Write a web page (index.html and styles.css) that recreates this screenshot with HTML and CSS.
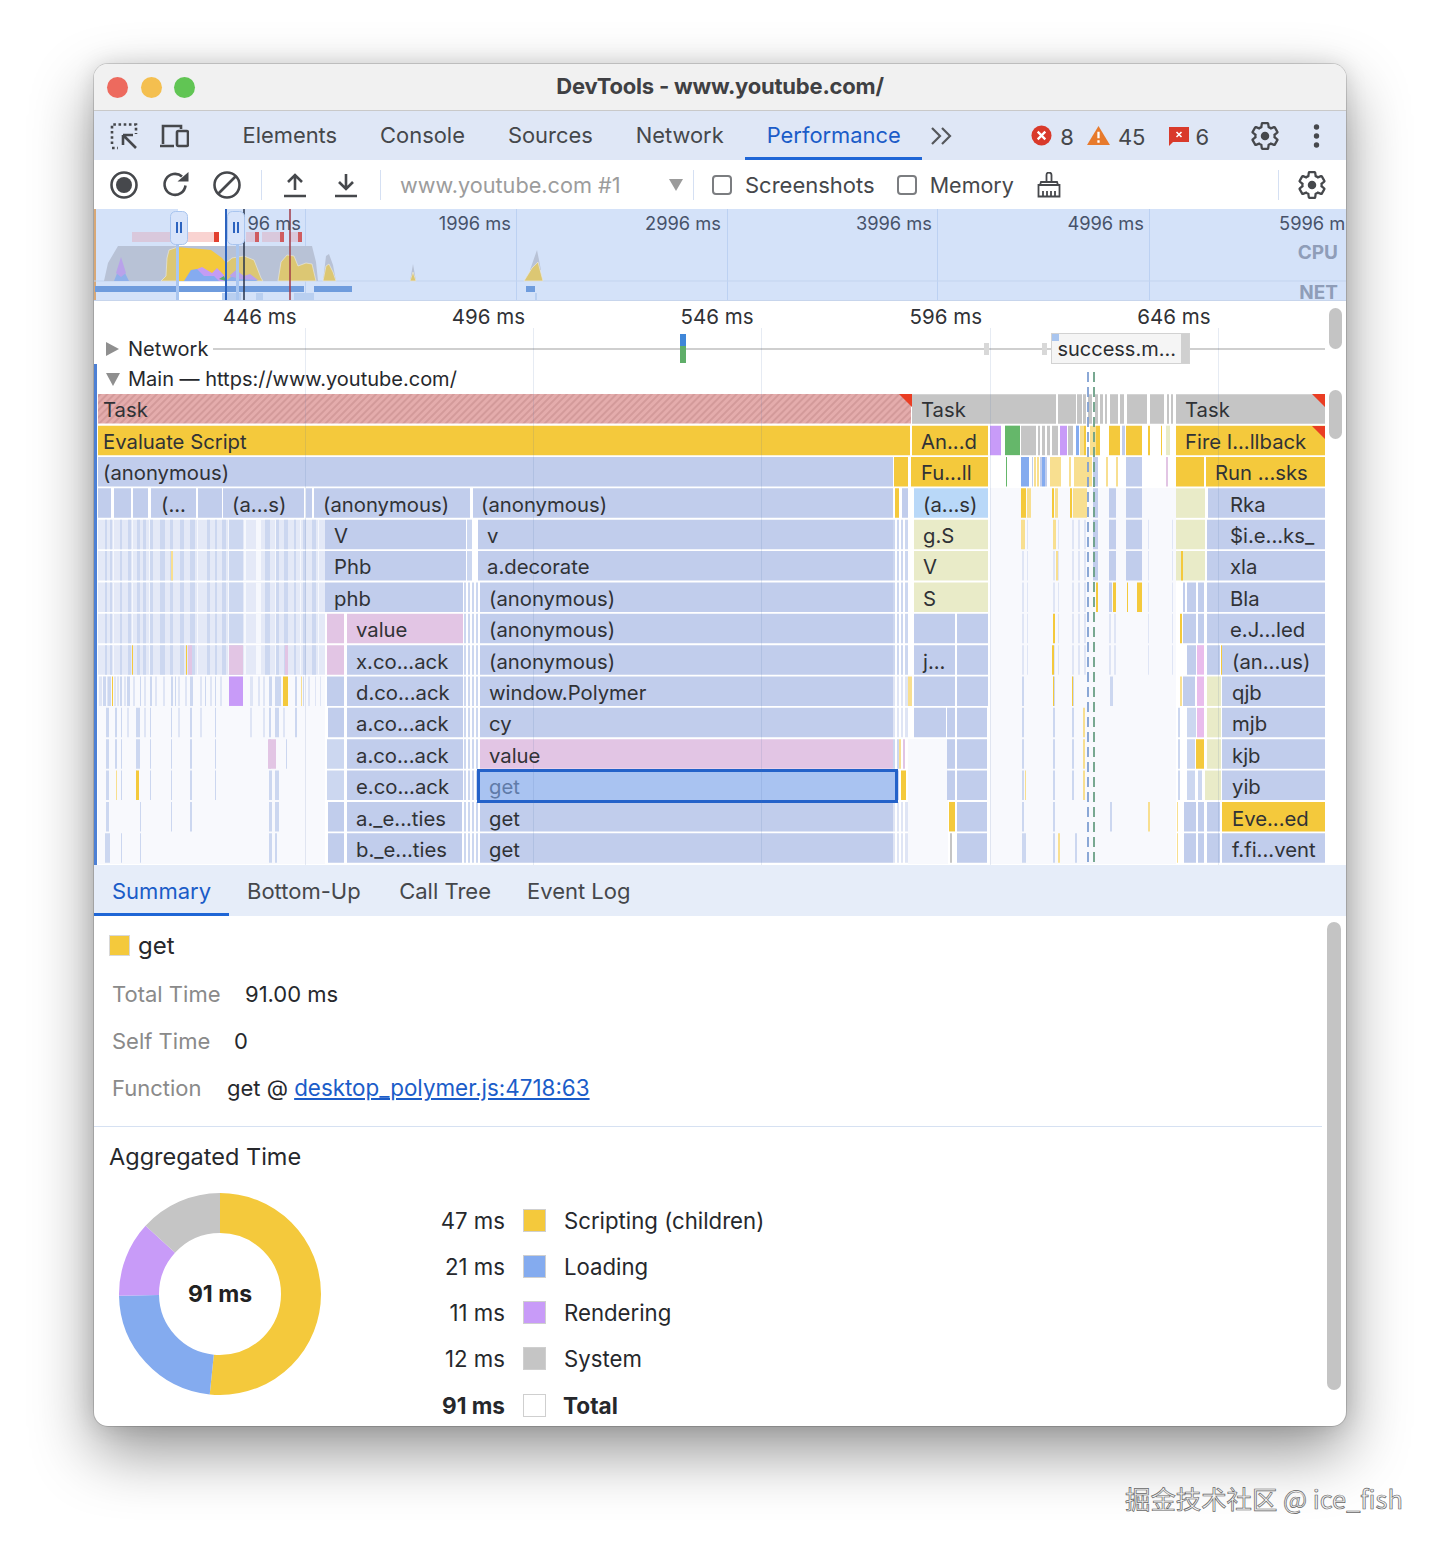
FILE: index.html
```html
<!DOCTYPE html>
<html lang="en">
<head>
<meta charset="utf-8">
<title>DevTools - www.youtube.com/</title>
<link rel="stylesheet" href="styles.css">
</head>
<body>
<svg class="defs" width="0" height="0" aria-hidden="true">
  <defs>
    <g id="gear"><path class="ico-line" d="M19.14 12.94c.04-.3.06-.61.06-.94 0-.32-.02-.64-.07-.94l2.03-1.58a.49.49 0 0 0 .12-.61l-1.92-3.32a.488.488 0 0 0-.59-.22l-2.39.96c-.5-.38-1.03-.7-1.62-.94l-.36-2.54a.484.484 0 0 0-.48-.41h-3.84c-.24 0-.43.17-.47.41l-.36 2.54c-.59.24-1.13.57-1.62.94l-2.39-.96c-.22-.08-.47 0-.59.22L2.74 8.87c-.12.21-.08.47.12.61l2.03 1.58c-.05.3-.09.63-.09.94s.02.64.07.94l-2.03 1.58a.49.49 0 0 0-.12.61l1.92 3.32c.12.22.37.29.59.22l2.39-.96c.5.38 1.03.7 1.62.94l.36 2.54c.05.24.24.41.48.41h3.84c.24 0 .44-.17.47-.41l.36-2.54c.59-.24 1.13-.56 1.62-.94l2.39.96c.22.08.47 0 .59-.22l1.92-3.32c.12-.22.07-.47-.12-.61l-2.01-1.58z"/><circle class="ico-fill" cx="12" cy="12" r="3.2"/></g>
    <pattern id="hatch" width="5" height="5" patternUnits="userSpaceOnUse" patternTransform="rotate(45)"><rect class="hatch-a" width="5" height="5"/><rect class="hatch-b" width="2" height="5"/></pattern>
    <path id="noise" d="M98 15H325"/>
    <path id="noise-a" d="M105 15H107M110 15H112M120 15H122M128 15H131M137 15H140M143 15H146M150 15H153M160 15H165M170 15H173M180 15H184M190 15H195M207 15H210M215 15H217M222 15H226M229 15H243M265 15H270M276 15H279M284 15H288M294 15H296M303 15H306M312 15H316"/>
    <path id="noise-gap" d="M113 15H114M132 15H133M149 15H150M197 15H198M228 15H229M244 15H246M256 15H261M275 15H276M300 15H301M318 15H319"/>
    <path id="right-a" d="M893 15H895M897 15H899M901 15H903M905 15H908"/>
    <path id="mid-a" d="M1022 15H1024M1027 15H1028M1053 15H1055M1058 15H1059M1072 15H1074M1078 15H1080M1084 15H1086M1109 15H1111M1114 15H1116M1148 15H1149M1172 15H1173"/>
    <path id="gut" d="M464 15H466M468 15H470M472 15H474M476 15H478"/>
  </defs>
</svg>

<main class="window">
  <header class="titlebar">
    <div class="lights"><i class="light l-red"></i><i class="light l-amber"></i><i class="light l-green"></i></div>
    <h1 class="title">DevTools - www.youtube.com/</h1>
  </header>

  <nav class="tabbar">
    <svg class="tool inspect" viewBox="0 0 28 28"><path class="ico-dots" d="M2 22V2.5H26V12"/><path class="ico-dots" d="M2 26h6"/><path class="ico-line2" d="M13 13h10M13 13v10M13.5 13.5L26 26"/></svg>
    <svg class="tool device" viewBox="0 0 30 26"><path class="ico-line2" d="M4 21V3h18v3M1 23h14"/><rect class="ico-line2" x="18" y="8" width="11" height="15" rx="1.5"/></svg>
    <div class="tabs">
      <span class="tab">Elements</span>
      <span class="tab">Console</span>
      <span class="tab">Sources</span>
      <span class="tab">Network</span>
      <span class="tab active">Performance</span>
    </div>
    <svg class="more" viewBox="0 0 24 20"><path d="M2 2l8 8-8 8M12 2l8 8-8 8"/></svg>
    <div class="status">
      <span class="stat s-err"><svg viewBox="0 0 22 22" class="stat-ico"><circle cx="11" cy="11" r="10.5" class="c-err"/><path d="M7 7l8 8M15 7l-8 8" class="c-x"/></svg>8</span>
      <span class="stat s-warn"><svg viewBox="0 0 24 22" class="stat-ico wide"><path d="M12 1L24 21H0z" class="c-warn"/><path d="M12 7v7M12 16v2.5" class="c-x"/></svg>45</span>
      <span class="stat s-flag"><svg viewBox="0 0 20 20" class="stat-ico small"><path d="M0 1h20v15H4L0 20z" class="c-err"/><path d="M7.5 6l5 5M12.5 6l-5 5" class="c-x thin"/></svg>6</span>
    </div>
    <svg class="gear gear-main" viewBox="0 0 24 24"><use href="#gear"/></svg>
    <svg class="kebab" viewBox="0 0 6 24"><circle cx="3" cy="3" r="2.7"/><circle cx="3" cy="12" r="2.7"/><circle cx="3" cy="21" r="2.7"/></svg>
  </nav>

  <div class="toolbar">
    <svg class="tool-b rec" viewBox="0 0 28 28"><circle class="ico-line2" cx="14" cy="14" r="12.5"/><circle class="ico-fill" cx="14" cy="14" r="8"/></svg>
    <svg class="tool-b reload" viewBox="0 0 28 28"><path class="ico-line2" d="M23.5 14.5A10.5 10.5 0 1 1 20 5.5"/><path class="ico-fill" d="M15.5 10.5H26.500V1z"/></svg>
    <svg class="tool-b clear" viewBox="0 0 28 28"><circle class="ico-line2" cx="14" cy="14" r="12.500"/><path class="ico-line2" d="M23 5L5 23"/></svg>
    <i class="sep s1"></i>
    <svg class="tool-c tool-up" viewBox="0 0 24 26"><path class="ico-line2" d="M12 18V3M5 10l7-7 7 7M1 24h22"/></svg>
    <svg class="tool-c tool-down" viewBox="0 0 24 26"><path class="ico-line2" d="M12 2v15M5 10l7 7 7-7M1 24h22"/></svg>
    <i class="sep s2"></i>
    <span class="target">www.youtube.com #1</span>
    <i class="caret"></i>
    <i class="sep s3"></i>
    <label class="check c1"><i class="box"></i>Screenshots</label>
    <label class="check c2"><i class="box"></i>Memory</label>
    <svg class="broom" viewBox="0 0 24 26"><path class="ico-line1" d="M9.500 9V3a2.500 2.500 0 0 1 5 0v6M3 13l1-3h16l1 3M1.500 13h21v11.500h-21zM6 24v-5M10 24v-5M14 24v-5M18 24v-5"/></svg>
    <i class="sep s4"></i>
    <svg class="gear gear-side" viewBox="0 0 24 24"><use href="#gear"/></svg>
  </div>

  <section class="overview" aria-label="Timeline overview">
    <svg class="overview-svg" viewBox="94 209 1252 91">
      <rect class="ov-bg" x="94" y="209" width="1252" height="91"/>
      <rect class="ov-white" x="178" y="209" width="48" height="91"/>
      <rect class="ov-edge" x="94" y="209" width="2" height="91"/>
      <path class="ov-grid" d="M305.500 209v91M516.500 209v91M727.500 209v91M937.500 209v91M1149.500 209v91"/>
      <path class="ov-base" d="M94 281H1346"/>
      <path class="task-dim" d="M132 232h46v10h-46zM246 232h13v10h-13zM262 232h22v10h-22zM289 232h13v10h-13z"/>
      <path class="task-lite" d="M178 232h36v10h-36z"/>
      <path class="task-tip" d="M214 232h5v10h-5z"/>
      <path class="task-tip-dim" d="M255 232h4v10h-4zM280 232h4v10h-4zM298 232h4v10h-4z"/>
      <path class="cpu-gray" d="M104 281L108 263L118 246H312L316 262L318 281zM323 281L326 256L329 254L333 265L336 281z"/>
      <path class="cpu-yellow-dim" d="M226 281V263L232 258L244 256L254 260L261 278L263 281zM278 281L281 262L287 255L294 256L298 266L306 263L312 264L316 281zM323 281L326 266L329 264L333 272L336 281zM161 281L166 276L167 258L169 250L178 247V281z"/>
      <path class="cpu-yellow-line" d="M178 281V247L187 248L201 249L211 250L222 258L226 263V281z"/>
      <path class="cpu-blue-dim" d="M114 281L118 271L121 259L124 271L129 281zM226 281L232 276L240 278L248 276L258 281z"/>
      <path class="cpu-purple-dim" d="M116 273L121 257L126 273L121 277zM229 276L236 270L244 276L250 274L258 280L240 279z"/>
      <path class="cpu-purple" d="M190 272L202 267L212 273L217 268L224 275L226 281H196z"/>
      <path class="cpu-blue" d="M184 281L191 270L197 269L204 276L214 276L219 281z"/>
      <path class="cpu-green" d="M219 279L224 276L226 281z"/>
      <path class="cpu-gray" d="M410 281L413 264L416 281zM530 270L537 250L541 270z"/>
      <path class="cpu-yellow-dim" d="M410 281L413 272L416 281zM524 281L532 268L538 262L543 281z"/>
      <path class="net-bar" d="M95 286h209v6h-209zM314 286h38v6h-38zM526 286h9v6h-9z"/>
      <path class="net-low" d="M222 293h19v7h-19zM256 293h7v7h-7zM294 293h20v7h-20zM535 293h2v7h-2z"/>
      <rect class="stem" x="176" y="244" width="3" height="56"/>
      <rect class="stem" x="236" y="244" width="3" height="56"/>
      <path class="mark-blue" d="M226 209v91"/>
      <path class="mark-dark" d="M244 209v91"/>
      <path class="mark-red" d="M290 209v91"/>
      <rect class="handle" x="170.500" y="211.500" width="17" height="33" rx="5"/>
      <rect class="handle" x="227.500" y="211.500" width="17" height="33" rx="5"/>
      <path class="grip" d="M177 222v11M181 222v11M234 222v11M238 222v11"/>
      <text class="ov-label" x="301" y="230">96 ms</text>
      <text class="ov-label" x="511" y="230">1996 ms</text>
      <text class="ov-label" x="721" y="230">2996 ms</text>
      <text class="ov-label" x="932" y="230">3996 ms</text>
      <text class="ov-label" x="1144" y="230">4996 ms</text>
      <text class="ov-label" x="1355" y="230">5996 ms</text>
      <text class="ov-tag" x="1338" y="259">CPU</text>
      <text class="ov-tag" x="1338" y="299">NET</text>
    </svg>
  </section>

  <section class="timeline">
    <div class="ruler">
      <span class="tick">446 ms</span>
      <span class="tick">496 ms</span>
      <span class="tick">546 ms</span>
      <span class="tick">596 ms</span>
      <span class="tick">646 ms</span>
    </div>
    <div class="track-row">
      <i class="tri right"></i><span class="track-name">Network</span>
      <div class="net-track">
        <i class="net-line"></i>
        <i class="net-req"></i>
        <i class="net-tick t1"></i>
        <i class="net-tick t2"></i>
        <span class="net-box"><i class="net-corner"></i>success.m...<i class="net-end"></i></span>
      </div>
    </div>
    <div class="track-row main-row">
      <i class="tri tri-down"></i><span class="track-name">Main — https://www.youtube.com/</span>
    </div>

    <svg class="flame" viewBox="94 395 1252 470">
      <rect class="pale" x="98" y="677" width="227" height="188"/>
      <rect class="pale" x="990" y="489" width="186" height="376"/>
      <rect class="pale" x="908" y="740" width="40" height="125"/>

      <!-- row 0 -->
      <g transform="translate(0 395)" class="bars">
        <rect class="hatched" x="98" width="813" height="29.500"/>
        <path class="gray" d="M912 15H1056M1058 15H1076M1077 15H1082M1083 15H1086M1088 15H1092M1095 15H1098M1100 15H1103M1105 15H1107M1110 15H1118M1120 15H1124M1127 15H1147M1150 15H1164M1167 15H1169M1171 15H1173M1176 15H1325"/>
      </g>
      <!-- row 1 -->
      <g transform="translate(0 426.400)" class="bars">
        <path class="yellow" d="M98 15H910M912 15H988M1084 15H1086M1096 15H1100M1109 15H1120M1126 15H1142M1148 15H1150M1161 15H1162M1176 15H1325"/>
        <path class="purple" d="M990 15H1001M1060 15H1067"/>
        <path class="green" d="M1005 15H1020"/>
        <path class="gray" d="M1021 15H1036M1038 15H1040M1042 15H1045M1047 15H1050M1052 15H1058M1068 15H1073"/>
        <path class="strong-blue" d="M1076 15H1079"/>
        <path class="lite-yellow" d="M1080 15H1084M1090 15H1096"/>
        <path class="fn" d="M1122 15H1125"/>
        <path class="pale-green" d="M1166 15H1170"/>
      </g>
      <!-- row 2 -->
      <g transform="translate(0 457.700)" class="bars">
        <path class="fn" d="M98 15H893M1032 15H1033M1040 15H1042M1045 15H1047M1093 15H1098M1126 15H1142"/>
        <path class="yellow" d="M894 15H908M911 15H988M1176 15H1204M1206 15H1325"/>
        <path class="green" d="M1006 15H1007"/>
        <path class="strong-blue" d="M1021 15H1029M1042 15H1045"/>
        <path class="lite-yellow" d="M1034 15H1036M1037 15H1039M1050 15H1061M1069 15H1071M1074 15H1092M1106 15H1108M1116 15H1118"/>
        <path class="pink" d="M1166 15H1168"/>
      </g>
      <!-- row 3 -->
      <g transform="translate(0 489.100)" class="bars">
        <path class="fn" d="M98 15H111M114 15H131M133 15H148M151 15H196M198 15H222M223 15H304M306 15H312M314 15H470M473 15H893M902 15H908M1093 15H1098M1109 15H1116M1126 15H1142M1208 15H1325"/>
        <path class="yellow" d="M895 15H899M1021 15H1026M1052 15H1054M1070 15H1072"/>
        <path class="lite-yellow" d="M1027 15H1031M1055 15H1058M1073 15H1087"/>
        <path class="sky" d="M914 15H988"/>
        <path class="pale-green" d="M1176 15H1205"/>
      </g>
      <!-- rows 4-8 noise -->
      <g transform="translate(0 520.400)" class="bars"><use href="#noise" class="base-n"/><use href="#noise-a" class="fn-n"/><use href="#noise-gap" class="blank"/><use href="#right-a" class="fn-n"/><use href="#mid-a" class="lite-n"/>
        <path class="fn" d="M325 15H466M478 15H893M1093 15H1098M1109 15H1116M1126 15H1142M1207 15H1325"/>
        <path class="pale-green" d="M914 15H988M1176 15H1205"/>
        <path class="lite-yellow" d="M1021 15H1025M1053 15H1056"/>
        <path class="fn-n" d="M467 15H472"/>
      </g>
      <g transform="translate(0 551.800)" class="bars"><use href="#noise" class="base-n"/><use href="#noise-a" class="fn-n"/><use href="#noise-gap" class="blank"/><use href="#right-a" class="fn-n"/><use href="#mid-a" class="lite-n"/>
        <path class="fn" d="M325 15H466M478 15H893M1093 15H1098M1109 15H1116M1126 15H1142M1207 15H1325"/>
        <path class="pale-green" d="M914 15H988M1176 15H1205"/>
        <path class="yellow" d="M1181 15H1183"/>
        <path class="lite-yellow" d="M1056 15H1058"/>
        <path class="lite-yellow" d="M171 15H173"/>
        <path class="fn-n" d="M467 15H472"/>
      </g>
      <g transform="translate(0 583.200)" class="bars"><use href="#noise" class="base-n"/><use href="#noise-a" class="fn-n"/><use href="#noise-gap" class="blank"/><use href="#right-a" class="fn-n"/><use href="#mid-a" class="lite-n"/><use href="#gut" class="fn-n"/>
        <path class="fn" d="M325 15H463M480 15H893M1109 15H1112M1183 15H1185M1187 15H1196M1198 15H1204M1207 15H1325"/>
        <path class="pale-green" d="M914 15H988"/>
        <path class="yellow" d="M1096 15H1098M1113 15H1116M1127 15H1128M1137 15H1142"/>
      </g>
      <g transform="translate(0 614.500)" class="bars"><use href="#noise" class="base-n"/><use href="#noise-a" class="fn-n"/><use href="#noise-gap" class="blank"/><use href="#right-a" class="fn-n"/><use href="#mid-a" class="lite-n"/><use href="#gut" class="fn-n"/>
        <path class="pink" d="M327 15H344M347 15H463"/>
        <path class="fn" d="M480 15H893M914 15H955M957 15H988M1183 15H1196M1198 15H1204M1207 15H1325"/>
        <path class="yellow" d="M1053 15H1055M1180 15H1182"/>
      </g>
      <g transform="translate(0 645.900)" class="bars"><use href="#noise" class="base-n"/><use href="#noise-a" class="fn-n"/><use href="#noise-gap" class="blank"/><use href="#right-a" class="fn-n"/><use href="#mid-a" class="lite-n"/><use href="#gut" class="fn-n"/>
        <path class="pink" d="M327 15H344M229 15H243M285 15H288M188 15H192"/>
        <path class="fn" d="M347 15H463M480 15H893M914 15H955M957 15H988M1187 15H1196M1207 15H1220M1222 15H1325"/>
        <path class="yellow" d="M132 15H133M186 15H187M1052 15H1054M1221 15H1222"/>
        <path class="pink-hot" d="M1197 15H1204"/>
      </g>
      <!-- rows 9-14 -->
      <g transform="translate(0 677.200)" class="bars"><use href="#gut" class="fn-n"/><use href="#right-a" class="lite-n"/>
        <path class="lite-n" d="M99 15H102M107 15H108M114 15H116M117 15H119M124 15H126M133 15H135M144 15H146M155 15H157M163 15H165M178 15H180M185 15H187M200 15H202M210 15H212M220 15H222M250 15H253M258 15H260M263 15H265M308 15H310M315 15H316M320 15H321"/>
        <path class="fn-n" d="M103 15H106M108 15H111M120 15H122M127 15H130M140 15H141M150 15H152M171 15H173M175 15H176M190 15H193M205 15H206M215 15H216M269 15H272M275 15H281M295 15H297M303 15H304M1022 15H1024M1053 15H1055M1072 15H1074M1110 15H1113"/>
        <path class="yellow" d="M112 15H113M283 15H288M1053 15H1054M1072 15H1073"/>
        <path class="lite-yellow" d="M301 15H302M908 15H912M1180 15H1182"/>
        <path class="purple" d="M229 15H243"/>
        <path class="fn" d="M327 15H344M347 15H463M480 15H893M914 15H955M957 15H988M1183 15H1195M1222 15H1325"/>
        <path class="pink-hot" d="M1197 15H1204"/>
        <path class="pale-green" d="M1207 15H1221"/>
      </g>
      <g transform="translate(0 708.600)" class="bars"><use href="#gut" class="fn-n"/><use href="#right-a" class="lite-n"/>
        <path class="lite-n" d="M127 15H129M144 15H146M178 15H180M200 15H202M250 15H252M263 15H265M283 15H285"/>
        <path class="fn-n" d="M106 15H109M115 15H117M121 15H122M136 15H140M150 15H151M171 15H172M190 15H192M215 15H216M269 15H271M275 15H279M295 15H297M1022 15H1024M1053 15H1055M1072 15H1074M1178 15H1180M1187 15H1196"/>
        <path class="fn" d="M328 15H344M347 15H463M480 15H893M914 15H946M947 15H955M957 15H987M1222 15H1325"/>
        <path class="lite-yellow" d="M1083 15H1085"/>
        <path class="pink-hot" d="M1197 15H1204"/>
        <path class="pale-green" d="M1207 15H1221"/>
      </g>
      <g transform="translate(0 740)" class="bars"><use href="#gut" class="fn-n"/>
        <path class="fn-n" d="M106 15H109M115 15H117M121 15H122M136 15H140M150 15H151M171 15H172M190 15H192M215 15H216M269 15H271M286 15H287M327 15H344M893 15H895M897 15H899M1022 15H1024M1053 15H1055M1072 15H1074M1178 15H1180M1187 15H1195"/>
        <path class="pink" d="M268 15H276M903 15H905"/>
        <path class="fn" d="M347 15H463M947 15H955M957 15H987M1222 15H1325"/>
        <path class="pink" d="M480 15H893"/>
        <path class="lite-yellow" d="M899 15H901M1083 15H1085"/>
        <path class="yellow" d="M1196 15H1204"/>
        <path class="pale-green" d="M1207 15H1221"/>
      </g>
      <g transform="translate(0 771.300)" class="bars"><use href="#gut" class="fn-n"/>
        <path class="fn-n" d="M106 15H109M121 15H122M136 15H137M150 15H151M171 15H172M190 15H192M215 15H216M269 15H272M275 15H279M327 15H344M893 15H895M897 15H899M1022 15H1024M1053 15H1055M1072 15H1074M1178 15H1180M1187 15H1195M1198 15H1202"/>
        <path class="lite-yellow" d="M116 15H117M1025 15H1026M1083 15H1085"/>
        <path class="yellow" d="M901 15H906M136 15H139"/>
        <path class="fn" d="M347 15H463M947 15H955M957 15H987M1222 15H1325"/>
        <path class="pale-green" d="M1205 15H1221"/>
      </g>
      <g transform="translate(0 802.700)" class="bars"><use href="#gut" class="fn-n"/><use href="#right-a" class="lite-n"/>
        <path class="fn-n" d="M106 15H109M140 15H141M171 15H172M190 15H192M269 15H272M275 15H279M1022 15H1024M1053 15H1055M1110 15H1112"/>
        <path class="lite-yellow" d="M1148 15H1150M1177 15H1178"/>
        <path class="yellow" d="M949 15H955"/>
        <path class="fn" d="M328 15H344M347 15H462M480 15H893M957 15H987M1184 15H1196M1198 15H1204M1207 15H1220"/>
        <path class="yellow" d="M1222 15H1325"/>
      </g>
      <g transform="translate(0 834)" class="bars"><use href="#gut" class="fn-n"/><use href="#right-a" class="lite-n"/>
        <path class="fn-n" d="M105 15H110M121 15H122M140 15H141M269 15H272M275 15H277M1022 15H1026M1053 15H1055M1075 15H1077"/>
        <path class="lite-yellow" d="M1058 15H1060M1177 15H1178"/>
        <path class="gray" d="M950 15H952"/>
        <path class="fn" d="M328 15H344M347 15H462M480 15H893M957 15H987M1184 15H1196M1198 15H1204M1207 15H1220M1222 15H1325"/>
      </g>

      <path class="tri-red" d="M899 395H912V408zM1312 395H1325V408zM1312 427H1325V440z"/>
      <rect class="selected" x="478.500" y="771.500" width="418" height="31"/>

      <g class="labels" transform="translate(0 1)">
        <text x="103" y="417">Task</text><text x="921" y="417">Task</text><text x="1185" y="417">Task</text>
        <text x="103" y="449">Evaluate Script</text><text x="921" y="449">An...d</text><text x="1185" y="449">Fire I...llback</text>
        <text x="103" y="480">(anonymous)</text><text x="921" y="480">Fu...ll</text><text x="1215" y="480">Run ...sks</text>
        <text x="161" y="512">(...</text><text x="232" y="512">(a...s)</text><text x="323" y="512">(anonymous)</text><text x="481" y="512">(anonymous)</text><text x="923" y="512">(a...s)</text><text x="1230" y="512">Rka</text>
        <text x="334" y="543">V</text><text x="487" y="543">v</text><text x="923" y="543">g.S</text><text x="1230" y="543">$i.e...ks_</text>
        <text x="334" y="574">Phb</text><text x="487" y="574">a.decorate</text><text x="923" y="574">V</text><text x="1230" y="574">xla</text>
        <text x="334" y="606">phb</text><text x="489" y="606">(anonymous)</text><text x="923" y="606">S</text><text x="1230" y="606">Bla</text>
        <text x="356" y="637">value</text><text x="489" y="637">(anonymous)</text><text x="1230" y="637">e.J...led</text>
        <text x="356" y="669">x.co...ack</text><text x="489" y="669">(anonymous)</text><text x="923" y="669">j...</text><text x="1232" y="669">(an...us)</text>
        <text x="356" y="700">d.co...ack</text><text x="489" y="700">window.Polymer</text><text x="1232" y="700">qjb</text>
        <text x="356" y="731">a.co...ack</text><text x="489" y="731">cy</text><text x="1232" y="731">mjb</text>
        <text x="356" y="763">a.co...ack</text><text x="489" y="763">value</text><text x="1232" y="763">kjb</text>
        <text x="356" y="794">e.co...ack</text><text class="sel-text" x="489" y="794">get</text><text x="1232" y="794">yib</text>
        <text x="356" y="826">a._e...ties</text><text x="489" y="826">get</text><text x="1232" y="826">Eve...ed</text>
        <text x="356" y="857">b._e...ties</text><text x="489" y="857">get</text><text x="1232" y="857">f.fi...vent</text>
      </g>
    </svg>

    <svg class="overlay" viewBox="94 301 1252 564" aria-hidden="true">
      <path class="grid-line" d="M305.500 328V865M533.500 328V865M761.500 328V865M990.500 328V865M1218.500 328V865"/>
      <path class="dash-blue" d="M1088 372V865"/>
      <path class="dash-green" d="M1094 372V865"/>
      <rect class="main-edge" x="94" y="364" width="3" height="501"/>
    </svg>
    <i class="thumb thumb-a"></i>
    <i class="thumb thumb-b"></i>
  </section>

  <nav class="subtabs">
    <span class="subtab active">Summary</span>
    <span class="subtab">Bottom-Up</span>
    <span class="subtab st-call">Call Tree</span>
    <span class="subtab">Event Log</span>
  </nav>

  <section class="details">
    <div class="summary">
      <div class="event"><i class="swatch sw-yellow"></i><span>get</span></div>
      <div class="fact"><span class="k k-total">Total Time</span><span>91.00 ms</span></div>
      <div class="fact"><span class="k k-self">Self Time</span><span>0</span></div>
      <div class="fact"><span class="k k-func">Function</span><span>get @ <a class="link" href="#">desktop_polymer.js:4718:63</a></span></div>
    </div>
    <div class="aggregate">
      <h2 class="agg-title">Aggregated Time</h2>
      <div class="agg-body">
        <div class="donut">
          <svg class="donut-svg" viewBox="0 0 202 202">
            <circle class="slice d-yellow" cx="101" cy="101" r="81" pathLength="91" stroke-dasharray="47 44"/>
            <circle class="slice d-blue" cx="101" cy="101" r="81" pathLength="91" stroke-dasharray="21 70" stroke-dashoffset="-47"/>
            <circle class="slice d-purple" cx="101" cy="101" r="81" pathLength="91" stroke-dasharray="11 80" stroke-dashoffset="-68"/>
            <circle class="slice d-gray" cx="101" cy="101" r="81" pathLength="91" stroke-dasharray="12 79" stroke-dashoffset="-79"/>
          </svg>
          <span class="donut-total">91 ms</span>
        </div>
        <ul class="legend">
          <li><span class="ms">47 ms</span><i class="swatch sw-yellow big"></i><span>Scripting (children)</span></li>
          <li><span class="ms">21 ms</span><i class="swatch sw-blue big"></i><span>Loading</span></li>
          <li><span class="ms">11 ms</span><i class="swatch sw-purple big"></i><span>Rendering</span></li>
          <li><span class="ms">12 ms</span><i class="swatch sw-gray big"></i><span>System</span></li>
          <li class="total"><span class="ms">91 ms</span><i class="swatch sw-white big"></i><span>Total</span></li>
        </ul>
      </div>
    </div>
    <i class="thumb thumb-c"></i>
  </section>
</main>
<div class="watermark">掘金技术社区 @ ice_fish</div>
</body>
</html>
```

FILE: styles.css
```css
* { box-sizing: border-box; }
html, body { margin: 0; padding: 0; background: #fff; }
body { width: 1440px; height: 1551px; position: relative; overflow: hidden; font-family: Inter, "Noto Sans", sans-serif; color: #2b2d31; }
.defs { position: absolute; }
i { display: block; font-style: normal; }

.window { position: absolute; left: 94px; top: 64px; width: 1252px; height: 1362px; border-radius: 14px; overflow: hidden; background: #fff; display: flex; flex-direction: column; box-shadow: 0 0 0 1px rgba(0,0,0,.14), 0 26px 62px rgba(0,0,0,.42), 0 0 22px rgba(0,0,0,.12); }

.ico-line { fill: none; stroke: #46484c; stroke-width: 1.7; }
.ico-line1 { fill: none; stroke: #46484c; stroke-width: 1.8; }
.ico-line2 { fill: none; stroke: #46484c; stroke-width: 2.6; }
.ico-dots { fill: none; stroke: #46484c; stroke-width: 2.6; stroke-dasharray: 2.6 2.6; }
.ico-fill { fill: #46484c; }

.titlebar { height: 47px; flex: none; background: #f1f1f1; border-bottom: 1px solid #c9c9c9; position: relative; display: flex; align-items: center; justify-content: center; padding-bottom: 3px; }
.lights { position: absolute; left: 13px; top: 13px; display: flex; gap: 12.500px; }
.light { width: 21px; height: 21px; border-radius: 50%; }
.l-red { background: #ed6a5e; }
.l-amber { background: #f4bf4f; }
.l-green { background: #61c554; }
.title { margin: 0; font-size: 22px; font-weight: 700; color: #3f4043; letter-spacing: -.2px; }

.tabbar { height: 49px; flex: none; background: #dfe7f6; display: flex; align-items: center; position: relative; padding-left: 16px; }
.tool { flex: none; }
.inspect { width: 28px; height: 28px; margin-right: 21px; }
.device { width: 30px; height: 26px; }
.tabs { display: flex; align-self: stretch; margin-left: 32px; }
.tab { display: flex; align-items: center; padding: 0 21.500px; font-size: 21.900px; color: #45474b; white-space: nowrap; border-bottom: 4px solid transparent; border-top: 2px solid transparent; }
.tab.active { color: #1a5cc8; border-bottom: 3px solid #1f66d6; padding-bottom: 1px; }
.more { width: 24px; height: 20px; margin-left: 8px; fill: none; stroke: #55575b; stroke-width: 2.2; }
.status { display: flex; align-items: center; margin-left: 77px; font-size: 22px; color: #45474b; padding-top: 2px; }
.stat { display: flex; align-items: center; gap: 8px; }
.s-warn { margin-left: 13px; }
.s-flag { margin-left: 23px; gap: 7px; }
.stat-ico { width: 21px; height: 21px; margin-top: -2px; }
.stat-ico.wide { width: 23px; }
.stat-ico.small { width: 20px; height: 20px; }
.c-err { fill: #d93a2b; }
.c-warn { fill: #e77a2c; }
.c-x { fill: none; stroke: #fff; stroke-width: 2.4; }
.c-x.thin { stroke-width: 1.6; }
.gear { width: 32px; height: 32px; flex: none; }
.gear-main { margin-left: 40px; }
.kebab { width: 7px; height: 24px; margin-left: 32px; fill: #46484c; }

.toolbar { height: 49px; flex: none; background: #fff; display: flex; align-items: center; padding-left: 16px; font-size: 22px; color: #45474b; }
.tool-b { width: 28px; height: 28px; flex: none; }
.reload { margin-left: 24px; }
.clear { margin-left: 23px; }
.sep { width: 1px; height: 30px; background: #d5e0f3; flex: none; }
.s1 { margin-left: 20px; }
.tool-c { width: 24px; height: 26px; flex: none; }
.tool-up { margin-left: 21px; }
.tool-down { margin-left: 27px; }
.s2 { margin-left: 22px; }
.target { margin-left: 19px; color: #9c9c9c; white-space: nowrap; width: 269px; font-size: 21.700px; }
.caret { width: 0; height: 0; border-left: 7px solid transparent; border-right: 7px solid transparent; border-top: 12px solid #9b9b9b; flex: none; }
.s3 { margin-left: 10px; }
.check { display: flex; align-items: center; gap: 13px; white-space: nowrap; }
.box { width: 20px; height: 20px; border: 2px solid #7b7d80; border-radius: 4px; flex: none; }
.c1 { margin-left: 18px; }
.c2 { margin-left: 22px; font-size: 21.500px; }
.broom { width: 24px; height: 26px; margin-left: 23px; flex: none; }
.s4 { margin-left: auto; }
.gear-side { margin: 0 18px 0 17px; }

.overview { height: 92px; flex: none; border-bottom: 1px solid #c7d5ec; }
.overview-svg { display: block; width: 1252px; height: 91px; overflow: visible; }
.ov-bg { fill: #d4e2f9; }
.ov-white { fill: #fff; }
.ov-edge { fill: #d8a877; }
.ov-grid { stroke: #bcd1f2; stroke-width: 1; fill: none; }
.ov-base { stroke: #c3d4ef; stroke-width: 1; }
.task-dim { fill: #d9c8dc; }
.task-lite { fill: #f9d3d1; }
.task-tip { fill: #e2402f; }
.task-tip-dim { fill: #cf5c60; }
.cpu-gray { fill: #b8c2d6; }
.cpu-yellow-dim { fill: #dcc773; stroke: #e8e6dc; stroke-width: .7; }
.cpu-yellow-line { fill: #f4c93c; }
.cpu-blue-dim { fill: #8fb0ea; }
.cpu-purple-dim { fill: #b9a2ea; }
.cpu-purple { fill: #c49cf4; }
.cpu-blue { fill: #85abf0; }
.cpu-green { fill: #5bb06a; }
.net-bar { fill: #6f9cdd; }
.net-low { fill: #b9cff0; }
.stem { fill: #a9c6f0; }
.mark-blue { stroke: #2c63bf; stroke-width: 2; }
.mark-dark { stroke: #26324a; stroke-width: 1.500; }
.mark-red { stroke: #a23a46; stroke-width: 1.500; }
.handle { fill: #d8e4fa; stroke: #a9c5ef; stroke-width: 1; }
.grip { stroke: #2c63bf; stroke-width: 2; fill: none; }
.ov-label { font-size: 18.300px; fill: #47526a; text-anchor: end; }
.ov-tag { font-size: 19px; font-weight: 700; fill: #8f9db8; text-anchor: end; }

.timeline { position: relative; flex: none; height: 564px; display: flex; flex-direction: column; }
.ruler { height: 32px; flex: none; display: grid; grid-template-columns: repeat(5, 228.500px); font-size: 20.500px; color: #303236; margin-left: -26px; }
.tick { text-align: right; line-height: 32px; }
.track-row { height: 31px; flex: none; display: flex; align-items: center; padding-left: 12px; font-size: 20px; color: #26282c; white-space: nowrap; }
.main-row { height: 30px; }
.tri { width: 0; height: 0; flex: none; }
.tri.right { border-top: 7px solid transparent; border-bottom: 7px solid transparent; border-left: 13px solid #8f8f8f; margin-right: 9px; }
.tri.tri-down { border-left: 7px solid transparent; border-right: 7px solid transparent; border-top: 13px solid #8f8f8f; margin-right: 8px; }
.track-name { flex: none; }
.net-track { position: relative; flex: 1; align-self: stretch; margin-left: 5px; margin-right: 21px; }
.net-line { position: absolute; left: 0; right: 0; top: 15px; height: 2px; background: #cfcfcf; }
.net-req { position: absolute; left: 467px; top: 1px; width: 6px; height: 29px; background: linear-gradient(#3f86d8 0 40%, #5fae69 40%); }
.net-tick { position: absolute; top: 10px; width: 5px; height: 12px; background: #d8d8d8; }
.t1 { left: 771px; }
.t2 { left: 829px; }
.net-box { position: absolute; left: 838px; top: 0; width: 139px; height: 31px; background: #f5f5f5; border: 1px solid #d2d2d2; padding-left: 5px; line-height: 30px; font-size: 20px; color: #2b2d31; }
.net-corner { position: absolute; left: 0; top: 0; width: 7px; height: 7px; background: #a9c5ef; }
.net-end { position: absolute; right: 0; top: 0; bottom: 0; width: 8px; background: #d0d0d0; }

.flame { display: block; width: 1252px; height: 470px; flex: none; }
.pale { fill: #f8f9fd; }
.bars path, .bars use { fill: none; stroke-width: 29.500px; }
.fn { stroke: #c1cdec; }
.fn-n { stroke: #ccd7f0; }
.base-n { stroke: #e4e9f7; }
.lite-n { stroke: #dfe5f5; }
.blank { stroke: #f6f8fd; }
.yellow { stroke: #f4c93c; }
.lite-yellow { stroke: #f8df90; }
.gray { stroke: #c5c5c5; }
.purple { stroke: #c89bf8; }
.green { stroke: #65b76a; }
.strong-blue { stroke: #84abef; }
.pink { stroke: #e2c5e4; }
.pink-hot { stroke: #e9bcec; }
.sky { stroke: #b9d8f8; }
.pale-green { stroke: #e9ebc8; }
.hatched { fill: url(#hatch); }
.hatch-a { fill: #e4acac; }
.hatch-b { fill: #d39a9a; }
.tri-red { fill: #ea3d23; }
.selected { fill: #a9c3f1; stroke: #2462c9; stroke-width: 3; }
.labels text { font-size: 20.300px; fill: #303236; }
.labels .sel-text { fill: #607ba8; }

.overlay { position: absolute; left: 0; top: 0; width: 1252px; height: 564px; pointer-events: none; }
.grid-line { fill: none; stroke: rgba(80,110,170,.14); stroke-width: 1; }
.dash-blue { fill: none; stroke: #7f9fd2; stroke-width: 1.800; stroke-dasharray: 10 5; }
.dash-green { fill: none; stroke: #6a9f86; stroke-width: 1.800; stroke-dasharray: 10 5; }
.main-edge { fill: #4d80d4; }
.thumb { position: absolute; width: 13px; border-radius: 7px; background: #c4c4c4; }
.thumb-a { left: 1235px; top: 7px; height: 41px; }
.thumb-b { left: 1235px; top: 89px; height: 49px; }
.thumb-c { left: 1233px; top: 6px; height: 468px; width: 14px; }

.subtabs { height: 51px; flex: none; background: #e6edf9; display: flex; font-size: 22px; color: #45474b; }
.subtab { display: flex; align-items: center; padding: 0 18px; border-bottom: 3px solid transparent; border-top: 3px solid transparent; white-space: nowrap; }
.subtab.active { color: #1a5cc8; border-bottom-color: #1f66d6; }
.st-call { margin-left: 2.500px; }

.details { position: relative; flex: 1; min-height: 0; font-size: 22px; color: #26282c; }
.summary { height: 211px; width: 1228px; border-bottom: 1px solid #d6e1f2; padding: 19px 0 0 15px; }
.event { display: flex; align-items: center; gap: 8px; height: 21px; font-size: 24px; }
.swatch { flex: none; width: 21px; height: 21px; border: 1px solid #d8d8d8; }
.sw-yellow { background: #f4c93c; }
.sw-blue { background: #84abef; }
.sw-purple { background: #c89bf8; }
.sw-gray { background: #c5c5c5; }
.sw-white { background: #fff; }
.fact { display: flex; padding-left: 3px; height: 47px; align-items: center; }
.event + .fact { margin-top: 14px; }
.k { color: #8a8a8a; }
.k-total { width: 133px; }
.k-self { width: 122px; }
.k-func { width: 115px; }
.link { color: #1b5dc9; text-decoration: underline; font-size: 22.400px; }
.aggregate { padding: 16px 0 0 15px; }
.agg-title { margin: 0; font-size: 23.500px; font-weight: 400; line-height: 28px; color: #26282c; }
.agg-body { display: flex; margin-top: 22px; }
.donut { position: relative; width: 202px; height: 202px; margin-left: 10px; flex: none; }
.donut-svg { display: block; width: 202px; height: 202px; transform: rotate(-90deg); }
.slice { fill: none; stroke-width: 40; }
.d-yellow { stroke: #f4c93c; }
.d-blue { stroke: #84abef; }
.d-purple { stroke: #c89bf8; }
.d-gray { stroke: #c5c5c5; }
.donut-total { position: absolute; inset: 0; display: flex; align-items: center; justify-content: center; font-size: 23px; font-weight: 700; color: #222; }
.legend { list-style: none; margin: 4px 0 0 86px; padding: 0; font-size: 22.200px; }
.legend li { display: flex; align-items: center; height: 46px; gap: 18px; }
.ms { width: 98px; text-align: right; }
.swatch.big { width: 23px; height: 23px; border: 1.500px solid #cfcfcf; }
.legend .total { font-weight: 700; font-size: 22.600px; padding-top: 2px; gap: 17.500px; }

.watermark { position: absolute; left: 1125px; top: 1480px; font-family: "Noto Sans CJK SC", Inter, sans-serif; font-size: 25.400px; white-space: nowrap; color: #f4f4f4; -webkit-text-stroke: .7px #666; }
```
